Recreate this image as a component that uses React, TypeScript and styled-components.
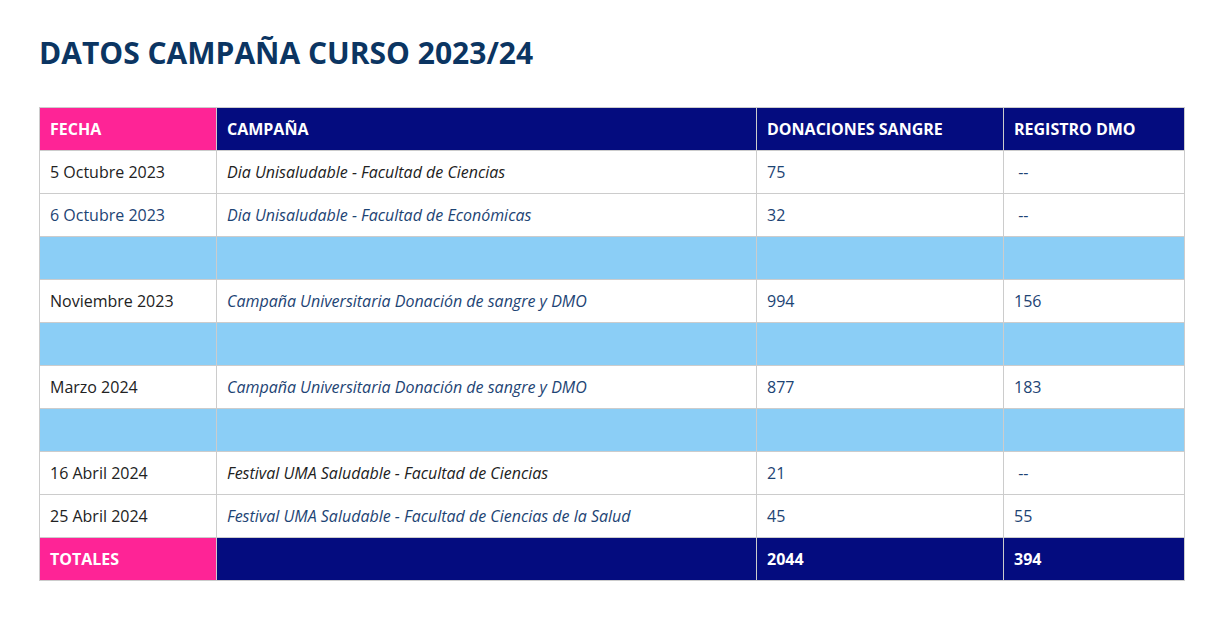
import React from "react";
import styled, { createGlobalStyle } from "styled-components";

const Global = createGlobalStyle`
  html, body { margin: 0; padding: 0; background: #ffffff; }
  body { font-family: "Open Sans", "Liberation Sans", sans-serif; }
`;

const PINK = "#fe2496";
const NAVY = "#040c7f";
const SKY = "#8bcef6";
const DARK = "#222222";
const BLUE = "#1d4474";
const LINE = "#cccccc";

const Page = styled.div`
  padding: 33px 29px 0 39px;
`;

const Title = styled.h1`
  margin: 0 0 34px 0;
  font-family: "Open Sans", "Liberation Sans", sans-serif;
  font-weight: 700;
  font-size: 30px;
  line-height: 40px;
  color: #0b3562;
`;

const Table = styled.table`
  width: 1146px;
  border-collapse: collapse;
  table-layout: fixed;
  border: 1px solid ${LINE};
`;

const HeadCell = styled.th<{ $accent?: boolean }>`
  background: ${(p) => (p.$accent ? PINK : NAVY)};
  color: #ffffff;
  text-align: left;
  font-weight: 700;
  font-size: 16px;
  height: 42px;
  padding: 0 10px;
  border: 1px solid ${LINE};
`;

const Cell = styled.td<{ $blue?: boolean; $italic?: boolean }>`
  color: ${(p) => (p.$blue ? BLUE : DARK)};
  font-style: ${(p) => (p.$italic ? "italic" : "normal")};
  font-size: 16px;
  height: 42px;
  padding: 0 10px;
  border: 1px solid ${LINE};
  background: #ffffff;
  white-space: nowrap;
`;

const SpacerCell = styled.td`
  background: ${SKY};
  height: 42px;
  padding: 0;
  border: 1px solid ${LINE};
`;

const TotalCell = styled.td<{ $accent?: boolean }>`
  background: ${(p) => (p.$accent ? PINK : NAVY)};
  color: #ffffff;
  font-weight: 700;
  font-size: 16px;
  height: 42px;
  padding: 0 10px;
  border: 1px solid ${LINE};
`;

type Row =
  | { kind: "spacer" }
  | {
      kind: "data";
      date: string;
      dateBlue?: boolean;
      campaign: string;
      campBlue?: boolean;
      don: string;
      dmo: string;
    };

const rows: Row[] = [
  { kind: "data", date: "5 Octubre 2023", campaign: "Dia Unisaludable - Facultad de Ciencias", don: "75", dmo: "\u00a0--" },
  { kind: "data", date: "6 Octubre 2023", dateBlue: true, campaign: "Dia Unisaludable - Facultad de Económicas", campBlue: true, don: "32", dmo: "\u00a0--" },
  { kind: "spacer" },
  { kind: "data", date: "Noviembre 2023", campaign: "Campaña Universitaria Donación de sangre y DMO", campBlue: true, don: "994", dmo: "156" },
  { kind: "spacer" },
  { kind: "data", date: "Marzo 2024", campaign: "Campaña Universitaria Donación de sangre y DMO", campBlue: true, don: "877", dmo: "183" },
  { kind: "spacer" },
  { kind: "data", date: "16 Abril 2024", campaign: "Festival UMA Saludable - Facultad de Ciencias", don: "21", dmo: "\u00a0--" },
  { kind: "data", date: "25 Abril 2024", campaign: "Festival UMA Saludable - Facultad de Ciencias de la Salud", campBlue: true, don: "45", dmo: "55" },
];

export default function App() {
  return (
    <>
      <Global />
      <Page>
        <Title>DATOS CAMPAÑA CURSO 2023/24</Title>
        <Table>
          <colgroup>
            <col style={{ width: 177 }} />
            <col style={{ width: 540 }} />
            <col style={{ width: 247 }} />
            <col style={{ width: 181 }} />
          </colgroup>
          <thead>
            <tr>
              <HeadCell $accent>FECHA</HeadCell>
              <HeadCell>CAMPAÑA</HeadCell>
              <HeadCell>DONACIONES SANGRE</HeadCell>
              <HeadCell>REGISTRO DMO</HeadCell>
            </tr>
          </thead>
          <tbody>
            {rows.map((r, i) =>
              r.kind === "spacer" ? (
                <tr key={i}>
                  <SpacerCell />
                  <SpacerCell />
                  <SpacerCell />
                  <SpacerCell />
                </tr>
              ) : (
                <tr key={i}>
                  <Cell $blue={r.dateBlue}>{r.date}</Cell>
                  <Cell $italic $blue={r.campBlue}>{r.campaign}</Cell>
                  <Cell $blue>{r.don}</Cell>
                  <Cell $blue>{r.dmo}</Cell>
                </tr>
              )
            )}
            <tr>
              <TotalCell $accent>TOTALES</TotalCell>
              <TotalCell />
              <TotalCell>2044</TotalCell>
              <TotalCell>394</TotalCell>
            </tr>
          </tbody>
        </Table>
      </Page>
    </>
  );
}
